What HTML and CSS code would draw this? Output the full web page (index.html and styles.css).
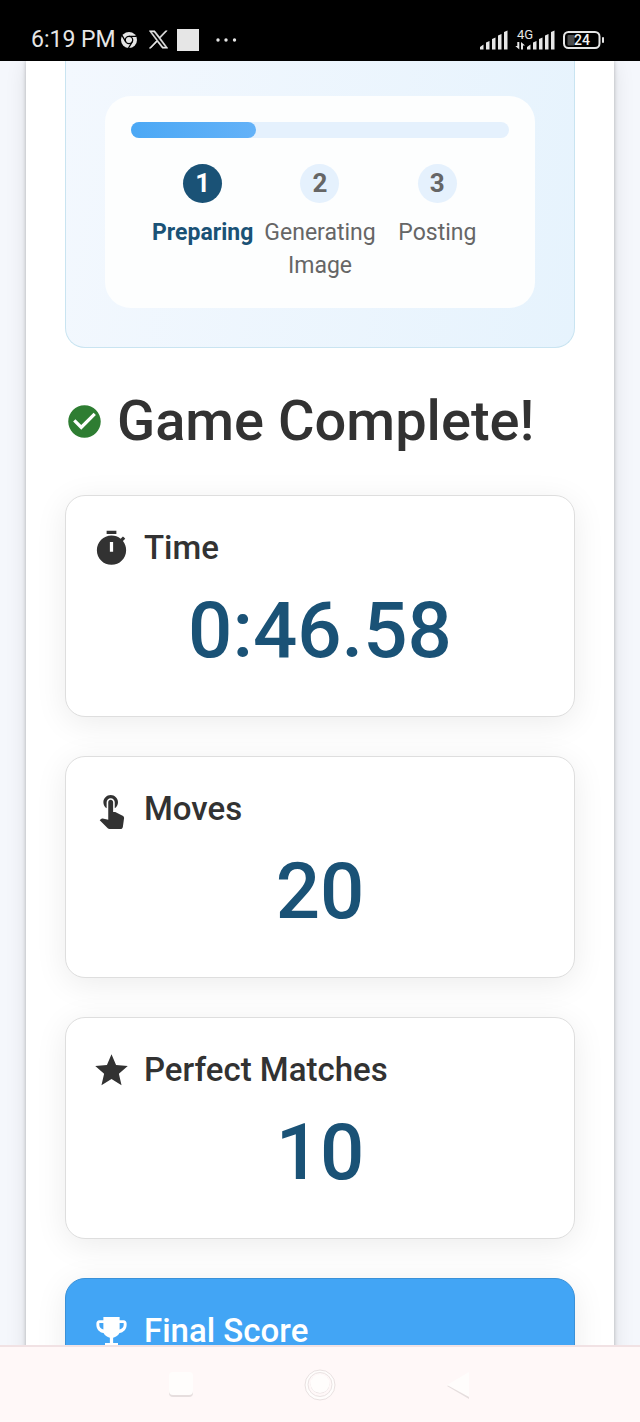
FILE: index.html
```html
<!DOCTYPE html>
<html lang="en">
<head>
<meta charset="utf-8">
<meta name="viewport" content="width=device-width, initial-scale=1">
<title>Game Complete</title>
<link rel="stylesheet" href="styles.css">
</head>
<body>
<div class="screen">
  <header class="status">
    <div class="status-left">
      <span class="clock">6:19 PM</span>
      <svg width="16" height="16" viewBox="0 0 16 16"><circle cx="8" cy="8" r="8" fill="#e6e6e6"/><g fill="none" stroke="#000" stroke-width="1.3"><circle cx="8" cy="8" r="3.7"/><path d="M8 4.3h7.5M4.8 9.9 1 3.4M11.2 9.9 7.5 16"/></g></svg>
      <svg class="x-logo" width="19" height="19" viewBox="0 0 24 24"><path fill="#e6e6e6" stroke="#e6e6e6" stroke-width=".7" d="M14.3 10.200 23 1h-2.100l-7.500 7.800L7.300 1H.3l9.200 12.300L.3 23h2.100l8-8.300L16.800 23h7zM11.400 13.500l-.9-1.300L3.100 2.500h3.200l6 7.600.9 1.300 7.700 10.200h-3.200z"/></svg>
      <span class="app-square"></span>
      <svg class="more" width="22" height="6" viewBox="0 0 22 6" fill="#e6e6e6"><circle cx="3" cy="3" r="1.700"/><circle cx="11" cy="3" r="1.700"/><circle cx="19.500" cy="3" r="1.700"/></svg>
    </div>
    <div class="status-right">
      <svg width="76" height="22" viewBox="0 0 76 22"><g fill="#e6e6e6"><path d="M1 20.500v-2.500l3.500-2.500v5zM7 20.500v-7l3.500-1.500v8.500zM13 20.500v-10.500l3.500-1.500v12zM19 20.500V6.500L22.500 5v15.500zM25 20.500V3l3.500-1.500v19zM48 20.500v-2.500l3.500-2.500v5zM54 20.500v-7l3.500-1.500v8.500zM60 20.500v-10.500l3.500-1.500v12zM66 20.500V6.500L69.500 5v15.500zM72 20.500V3l3.500-1.500v19z"/><path d="M38.300 13h2v7.500L36.300 17h2zM42 20.500V13l4 3.500h-2v4z"/></g><text class="net" x="38" y="10">4G</text></svg>
      <svg width="42" height="18" viewBox="0 0 42 18"><rect x="1" y="1" width="35.500" height="16" rx="4.500" fill="none" stroke="#e6e6e6" stroke-width="2"/><rect x="4.500" y="4" width="7" height="10.500" rx="1" fill="#4a4a4a"/><rect x="39" y="6" width="2" height="6" rx="1" fill="#e6e6e6"/><text class="level" x="19" y="14" text-anchor="middle">24</text></svg>
    </div>
  </header>

  <main class="viewport">
    <div class="paper">
      <section class="share">
        <div class="progress-card">
          <div class="track"><div class="fill"></div></div>
          <ol class="steps">
            <li class="step active"><span class="num">1</span><span>Preparing</span></li>
            <li class="step"><span class="num">2</span><span>Generating Image</span></li>
            <li class="step"><span class="num">3</span><span>Posting</span></li>
          </ol>
        </div>
      </section>

      <h1 class="title">
        <svg class="icon" viewBox="0 0 24 24"><path d="M12 2C6.480 2 2 6.480 2 12s4.480 10 10 10 10-4.480 10-10S17.520 2 12 2zm-2 15-5-5 1.410-1.410L10 14.170l7.590-7.590L19 8z"/></svg>
        Game Complete!
      </h1>

      <div class="cards">
        <section class="card">
          <h2 class="label"><svg class="icon" viewBox="0 0 24 24"><path d="M9 1h6v2H9zM19.030 7.390l1.420-1.420c-.43-.51-.9-.99-1.410-1.410l-1.420 1.420C16.070 4.740 14.120 4 12 4c-4.970 0-9 4.030-9 9s4.020 9 9 9 9-4.030 9-9c0-2.120-.74-4.070-1.970-5.610zM13 14h-2V8h2z"/></svg>Time</h2>
          <p class="value">0:46.58</p>
        </section>
        <section class="card">
          <h2 class="label"><svg class="icon" viewBox="0 0 24 24"><path d="M9 11.240V7.500C9 6.120 10.120 5 11.500 5S14 6.120 14 7.500v3.740c1.210-.81 2-2.180 2-3.740C16 5.010 13.990 3 11.500 3S7 5.010 7 7.500c0 1.560.79 2.930 2 3.740zm9.840 4.630-4.540-2.260c-.17-.07-.35-.11-.54-.11H13v-6c0-.83-.67-1.500-1.500-1.500S10 6.670 10 7.500v10.740l-3.430-.72c-.08-.01-.15-.03-.24-.03-.31 0-.59.13-.79.33l-.79.8 4.940 4.940c.27.27.65.44 1.060.44h6.790c.75 0 1.330-.55 1.440-1.280l.75-5.270c.01-.07.02-.14.02-.2 0-.62-.38-1.160-.91-1.380z"/></svg>Moves</h2>
          <p class="value">20</p>
        </section>
        <section class="card">
          <h2 class="label"><svg class="icon" viewBox="0 0 24 24"><path d="M12 17.270 18.180 21l-1.640-7.030L22 9.240l-7.190-.61L12 2 9.190 8.630 2 9.240l5.460 4.730L5.820 21z"/></svg>Perfect Matches</h2>
          <p class="value">10</p>
        </section>
        <section class="card final">
          <h2 class="label"><svg class="icon" viewBox="0 0 24 24"><path d="M7 3h10v2h2.500c1.100 0 1.800.9 1.800 2v1c0 2.550-1.920 4.630-4.390 4.940-.8 1.500-2.200 2.500-3.910 2.960V19h3v2H8v-2h3v-3.100c-1.710-.46-3.110-1.460-3.910-2.960C4.620 12.630 2.700 10.550 2.700 8V7c0-1.100.7-2 1.800-2H7zM4.500 6.800V8c0 1.300.9 2.400 2.500 2.820V6.800zm15 0H17v4.020c1.600-.42 2.500-1.520 2.500-2.820z" fill-rule="evenodd"/></svg>Final Score</h2>
        </section>
      </div>
    </div>
  </main>

  <nav class="navbar" aria-label="System">
    <button class="key" aria-label="Recent apps"><svg width="34" height="34" viewBox="0 0 34 34"><rect x="5" y="6" width="24" height="23" rx="4" fill="#e6dede"/><rect x="5" y="4" width="24" height="23" rx="4" fill="#fffdfc"/></svg></button>
    <button class="key" aria-label="Home"><svg width="34" height="34" viewBox="0 0 34 34"><circle cx="17" cy="17" r="15" fill="#fffdfc" stroke="#e9e1e1"/><circle cx="17" cy="16.500" r="12" fill="#fff8f8" stroke="#eae3e3"/><circle cx="17" cy="16" r="9.500" fill="#e9e1e1"/><circle cx="17" cy="15.500" r="9.500" fill="#fffdfc"/></svg></button>
    <button class="key" aria-label="Back"><svg width="34" height="34" viewBox="0 0 34 34"><path d="M5 18 27 31V6z" fill="#e6dede"/><path d="M5 17 27 29V4z" fill="#fffdfc"/></svg></button>
  </nav>
</div>
</body>
</html>
```
FILE: styles.css
```css
* {
  box-sizing: border-box;
}

body,
h1,
h2,
p,
ol {
  margin: 0;
  padding: 0;
}

body {
  font-family: Roboto, "Liberation Sans", sans-serif;
  color: #323232;
  background: #f5f7fc;
}

.screen {
  display: flex;
  flex-direction: column;
  height: 100vh;
}

.status {
  display: flex;
  flex: none;
  align-items: center;
  justify-content: space-between;
  padding: 18px 35px 0 31px;
  height: 61px;
  background: #000;
  color: #e6e6e6;
}

.status-left,
.status-right {
  display: flex;
  align-items: center;
}

.status-left {
  gap: 5px;
}

.status-right {
  gap: 8px;
}

.clock {
  font-size: 23px;
  line-height: 28px;
}

.x-logo {
  margin-left: 7px;
}

.app-square {
  width: 22px;
  height: 22px;
  margin-left: 4px;
  background: #e6e6e6;
}

.more {
  margin-left: 11px;
}

.net {
  font-size: 13px;
  fill: #e6e6e6;
}

.level {
  font-size: 14px;
  font-weight: 500;
  fill: #f2f2f2;
}

.viewport {
  flex: 1;
  min-height: 0;
  overflow: hidden;
  padding: 0 26px;
}

.paper {
  min-height: 100%;
  padding: 0 39px;
  background: #fff;
  box-shadow: 0 0 4px rgba(0, 0, 0, 0.25), 0 3px 20px rgba(0, 0, 0, 0.1);
}

.share {
  padding: 35px 39px 39px;
  border: 1px solid #c9e4f1;
  border-top: 0;
  border-radius: 0 0 20px 20px;
  background: linear-gradient(100deg, #f3f8fe, #e6f3fd);
}

.progress-card {
  padding: 26px;
  border-radius: 26px;
  background: #fdfefe;
}

.track {
  height: 16px;
  border-radius: 8px;
  background: #e5f1fd;
}

.fill {
  width: 33%;
  height: 100%;
  border-radius: 8px;
  background: linear-gradient(90deg, #4ba8f5, #64b2f8);
}

.steps {
  display: grid;
  grid-template-columns: repeat(3, 1fr);
  padding: 26px 13px 0;
  list-style: none;
}

.step {
  display: flex;
  flex-direction: column;
  align-items: center;
  gap: 13px;
  color: #666;
  font-size: 23px;
  line-height: 33px;
  text-align: center;
}

.num {
  width: 39px;
  height: 39px;
  border-radius: 50%;
  background: #e5f1fd;
  font-size: 26px;
  font-weight: 700;
  line-height: 39px;
}

.active {
  color: #1a5276;
  font-weight: 700;
}

.active .num {
  background: #1a5276;
  color: #fff;
}

.icon {
  flex: none;
  width: 39px;
  height: 39px;
  fill: currentColor;
}

.title .icon {
  fill: #2e7d32;
}

.title {
  display: flex;
  align-items: center;
  gap: 13px;
  margin: 39px 0 40px;
  font-size: 56px;
  font-weight: 500;
  line-height: 68px;
}

.cards {
  display: flex;
  flex-direction: column;
  gap: 39px;
}

.card {
  padding: 26px 26px 39px;
  border: 1px solid #dedede;
  border-radius: 20px;
  background: #fff;
  box-shadow: 0 6px 32px rgba(0, 0, 0, 0.08);
}

.label {
  display: flex;
  align-items: center;
  gap: 13px;
  font-size: 33px;
  font-weight: 500;
  line-height: 52px;
}

.value {
  margin-top: 11px;
  color: #1a5276;
  font-size: 78px;
  font-weight: 500;
  line-height: 92px;
  text-align: center;
}

.final {
  border-color: #3a91d8;
  background: #42a5f5;
  color: #fff;
}

.navbar {
  display: flex;
  flex: none;
  align-items: center;
  justify-content: center;
  gap: 105px;
  height: 77px;
  border-top: 2px solid #f1e2e4;
  background: #fff8f8;
}

.key {
  display: flex;
  padding: 0;
  border: 0;
  background: none;
}
```
